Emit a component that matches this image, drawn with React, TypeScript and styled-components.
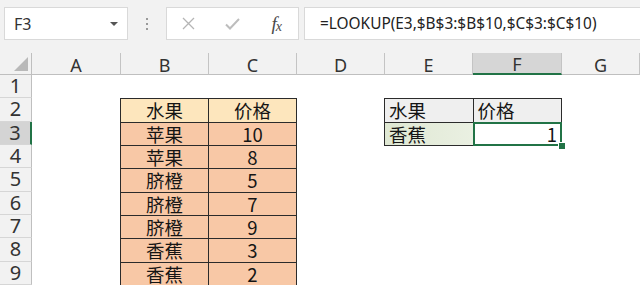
import React from "react";
import styled, { createGlobalStyle } from "styled-components";

const GREEN = "#217346";

const GlobalStyle = createGlobalStyle`
  html, body {
    margin: 0;
    padding: 0;
    background: #fff;
  }
  body {
    width: 640px;
    height: 285px;
    overflow: hidden;
    font-family: "Noto Sans", "Noto Sans CJK SC", sans-serif;
    color: #222;
  }
`;

const Page = styled.div`
  display: flex;
  flex-direction: column;
  width: 640px;
  height: 285px;
  overflow: hidden;
`;

const Toolbar = styled.div`
  display: flex;
  align-items: flex-start;
  height: 53px;
  box-sizing: border-box;
  padding: 7px 0 0 4px;
  background: #f2f2f2;
`;

const Field = styled.div`
  height: 33px;
  box-sizing: border-box;
  background: #fff;
  border: 1px solid #d9d9d9;
  display: flex;
  align-items: center;
`;

const NameBox = styled(Field)`
  width: 124px;
  padding: 0 9px 0 9px;
  justify-content: space-between;
  font-size: 16px;
  color: #333;
`;

const DropArrow = styled.span`
  width: 0;
  height: 0;
  border-left: 4px solid transparent;
  border-right: 4px solid transparent;
  border-top: 4px solid #555;
`;

const Grip = styled.div`
  width: 38px;
  height: 33px;
  display: flex;
  flex-direction: column;
  align-items: center;
  justify-content: center;
  gap: 3px;

  span {
    width: 2px;
    height: 2px;
    background: #9a9a9a;
  }
`;

const ButtonBox = styled(Field)`
  width: 133px;
  margin-right: 5px;
`;

const IconSlot = styled.div`
  width: 44px;
  height: 100%;
  display: flex;
  align-items: center;
  justify-content: center;
`;

const Fx = styled.span`
  font-family: "Liberation Serif", serif;
  font-style: italic;
  font-size: 19px;
  color: #4a4a4a;
  letter-spacing: -1px;

  sub {
    font-size: 14px;
    vertical-align: -1px;
  }
`;

const FormulaBox = styled(Field)`
  flex: 1;
  margin-right: -2px;
  padding-left: 15px;
  font-size: 15.4px;
  color: #222;
  white-space: nowrap;
`;

const Sheet = styled.div`
  display: grid;
  grid-template-columns: 32px 89px 88px 88px 88px 88px 89px 1fr;
  grid-template-rows: 22px repeat(9, 23.333px);
  background: #fff;
`;

const Corner = styled.div`
  background: #f2f2f2;
  border-right: 1px solid #bfbfbf;
  border-bottom: 1px solid #bfbfbf;
  display: flex;
  align-items: flex-end;
  justify-content: flex-end;
  padding: 0 3px 3px 0;

  &::after {
    content: "";
    width: 0;
    height: 0;
    border-left: 14px solid transparent;
    border-bottom: 14px solid #b9b9b9;
  }
`;

const ColHead = styled.div<{ $active?: boolean }>`
  background: ${({ $active }) => ($active ? "#d6d6d6" : "#f2f2f2")};
  border-right: 1px solid #c4c4c4;
  border-bottom: ${({ $active }) => ($active ? `2px solid ${GREEN}` : "1px solid #bfbfbf")};
  display: flex;
  align-items: center;
  justify-content: center;
  padding-top: 2px;
  font-size: 18px;
  color: #333;
  line-height: 1;
`;

const RowHead = styled.div<{ $active?: boolean }>`
  background: ${({ $active }) => ($active ? "#d4d4d4" : "#f2f2f2")};
  border-bottom: 1px solid #d6d6d6;
  border-right: ${({ $active }) => ($active ? `2px solid ${GREEN}` : "1px solid #bfbfbf")};
  display: flex;
  align-items: center;
  justify-content: center;
  font-size: 20px;
  color: #333;
  line-height: 1;
`;

const Block = styled.div<{ $col: string; $row: string; $cols: number }>`
  grid-column: ${({ $col }) => $col};
  grid-row: ${({ $row }) => $row};
  display: grid;
  grid-template-columns: repeat(${({ $cols }) => $cols}, 1fr);
  grid-auto-rows: 1fr;
  gap: 1px;
  background: #2b2b2b;
  border: 1px solid #2b2b2b;
  margin: 0 0 -1px -1px;
`;

const Cell = styled.div<{ $fill?: string; $align?: "left" | "center" | "right" }>`
  position: relative;
  background: ${({ $fill }) => $fill || "#fff"};
  display: flex;
  align-items: center;
  justify-content: ${({ $align }) =>
    $align === "left" ? "flex-start" : $align === "right" ? "flex-end" : "center"};
  padding: 0 4px;
  font-family: "Noto Sans CJK SC", "Noto Sans", sans-serif;
  font-size: 18.5px;
  color: #151515;
  line-height: 1;
`;

const Selected = styled(Cell)`
  &::after {
    content: "";
    position: absolute;
    inset: -1px;
    border: 2px solid ${GREEN};
    pointer-events: none;
  }
`;

const FillHandle = styled.span`
  position: absolute;
  right: -5px;
  bottom: -5px;
  width: 6px;
  height: 6px;
  background: ${GREEN};
  border: 1px solid #fff;
  z-index: 2;
`;

const columns = ["A", "B", "C", "D", "E", "F", "G"];
const fruits: [string, number][] = [
  ["苹果", 10],
  ["苹果", 8],
  ["脐橙", 5],
  ["脐橙", 7],
  ["脐橙", 9],
  ["香蕉", 3],
  ["香蕉", 2],
];

const HEAD_FILL = "#fde6bd";
const BODY_FILL = "#f8c8a6";

export default function App() {
  return (
    <Page>
      <GlobalStyle />
      <Toolbar>
        <NameBox>
          F3
          <DropArrow />
        </NameBox>
        <Grip>
          <span />
          <span />
          <span />
        </Grip>
        <ButtonBox>
          <IconSlot>
            <svg width="13" height="13" viewBox="0 0 13 13">
              <path d="M1 1L12 12M12 1L1 12" stroke="#b5b5b5" strokeWidth="1.3" fill="none" />
            </svg>
          </IconSlot>
          <IconSlot>
            <svg width="15" height="12" viewBox="0 0 15 12">
              <path d="M1 6.5L5 10.5L14 1" stroke="#bdbdbd" strokeWidth="2" fill="none" />
            </svg>
          </IconSlot>
          <IconSlot>
            <Fx>
              f<sub>x</sub>
            </Fx>
          </IconSlot>
        </ButtonBox>
        <FormulaBox>=LOOKUP(E3,$B$3:$B$10,$C$3:$C$10)</FormulaBox>
      </Toolbar>
      <Sheet>
        <Corner />
        {columns.map((c) => (
          <ColHead key={c} $active={c === "F"}>
            {c}
          </ColHead>
        ))}
        {Array.from({ length: 9 }, (_, i) => (
          <RowHead key={i} style={{ gridRow: i + 2, gridColumn: 1 }} $active={i === 2}>
            {i + 1}
          </RowHead>
        ))}
        <Block $col="3 / 5" $row="3 / 11" $cols={2}>
          <Cell $fill={HEAD_FILL}>水果</Cell>
          <Cell $fill={HEAD_FILL}>价格</Cell>
          {fruits.map(([name, price], i) => (
            <React.Fragment key={i}>
              <Cell $fill={BODY_FILL}>{name}</Cell>
              <Cell $fill={BODY_FILL}>{price}</Cell>
            </React.Fragment>
          ))}
        </Block>
        <Block $col="6 / 8" $row="3 / 5" $cols={2}>
          <Cell $fill="#efefef" $align="left">水果</Cell>
          <Cell $fill="#efefef" $align="left">价格</Cell>
          <Cell $fill="linear-gradient(90deg, #dfe8d3, #eaf0e2)" $align="left">香蕉</Cell>
          <Selected $align="right">
            1
            <FillHandle />
          </Selected>
        </Block>
      </Sheet>
    </Page>
  );
}
